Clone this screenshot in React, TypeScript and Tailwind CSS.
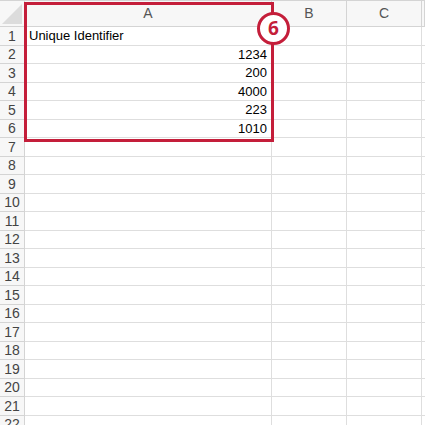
const cols = ["A", "B", "C", ""];
const values: Record<number, string> = { 2: "1234", 3: "200", 4: "4000", 5: "223", 6: "1010" };
const rows = Array.from({ length: 22 }, (_, i) => i + 1);

const App = () => {
  return (
    <div className="relative w-[425px] h-[425px] overflow-hidden bg-white border-t border-[#d4d4d4] font-['Liberation_Sans',Arial,sans-serif]">
      <div className="grid grid-cols-[25px_247px_75px_75px_1fr]">
        {/* header row */}
        <div className="relative h-[26px] border-r border-b border-[#d4d4d4] bg-[#f7f7f7] overflow-hidden">
          <svg className="absolute right-[2px] bottom-[2px]" width="20" height="20" viewBox="0 0 20 20">
            <polygon points="20,0 20,20 0,20" fill="#dcdcdc" />
          </svg>
        </div>
        {cols.map((c, i) => (
          <div
            key={i}
            className="h-[26px] flex items-center justify-center border-r border-b border-[#d4d4d4] bg-[#f7f7f7] text-[14px] text-[#555]"
          >
            {c}
          </div>
        ))}

        {rows.map((r) => (
          <div key={r} className="contents">
            <div
              className={`${r % 2 ? "h-[19px]" : "h-[18px]"} flex items-center justify-center border-r border-b border-[#d4d4d4] bg-[#f7f7f7] text-[14px] text-[#444]`}
            >
              {r}
            </div>
            <div
              className={`${r % 2 ? "h-[19px]" : "h-[18px]"} flex items-center border-r border-b border-[#dedede] px-[4px] text-[13px] text-black ${r === 1 ? "justify-start" : "justify-end"}`}
            >
              {r === 1 ? "Unique Identifier" : values[r] ?? ""}
            </div>
            <div className={`${r % 2 ? "h-[19px]" : "h-[18px]"} border-r border-b border-[#dedede]`} />
            <div className={`${r % 2 ? "h-[19px]" : "h-[18px]"} border-r border-b border-[#dedede]`} />
            <div className={`${r % 2 ? "h-[19px]" : "h-[18px]"} border-b border-[#dedede]`} />
          </div>
        ))}
      </div>

      {/* highlight box */}
      <div className="absolute left-[24px] top-[1px] w-[250px] h-[140px] border-[3px] border-[#c41e3a]" />
      <div className="absolute left-[257px] top-[11px] w-[33px] h-[33px] rounded-full border-[3px] border-[#c41e3a] bg-white flex items-center justify-center text-[19px] font-bold text-[#c41e3a] font-['Open_Sans',sans-serif]">
        6
      </div>
    </div>
  );
};

export default App;
